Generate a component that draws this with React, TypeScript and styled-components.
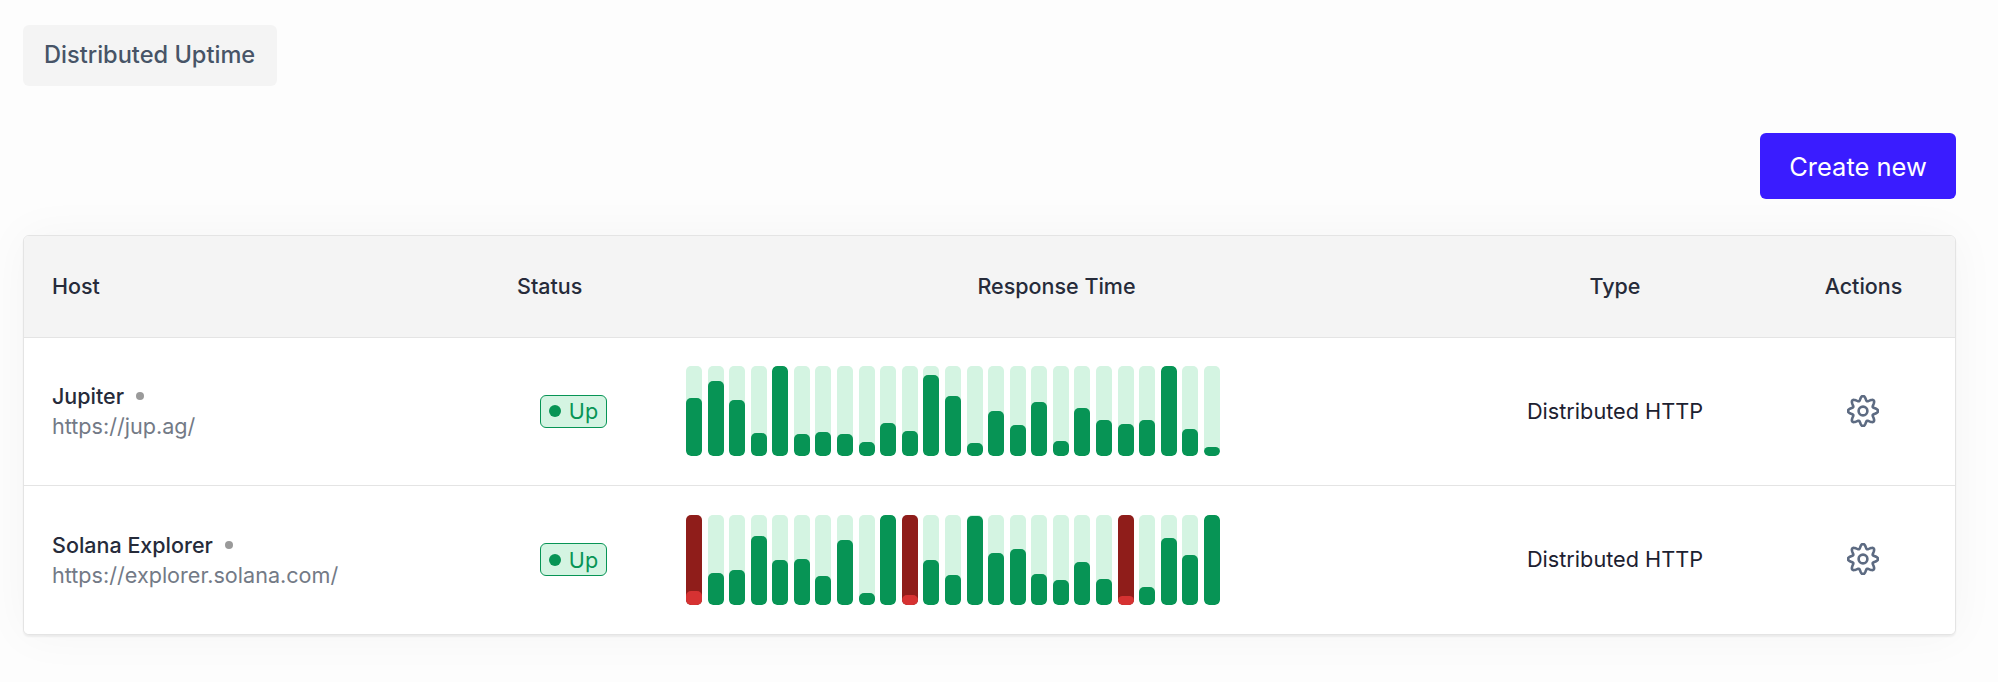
import React from "react";
import styled, { createGlobalStyle } from "styled-components";

const GlobalStyle = createGlobalStyle`
  html, body {
    margin: 0;
    background: #fdfdfd;
    font-family: Inter, "Liberation Sans", sans-serif;
  }
`;

const Page = styled.div`
  box-sizing: border-box;
  width: 1998px;
  height: 682px;
  padding: 25px 42px 0 23px;
  overflow: hidden;
`;

const Crumb = styled.div`
  display: inline-flex;
  align-items: center;
  height: 61px;
  padding: 0 21px 2px;
  box-sizing: border-box;
  width: 254px;
  background: #f4f4f4;
  border-radius: 6px;
  color: #475467;
  font-size: 23.6px;
  font-weight: 500;
  white-space: nowrap;
`;

const Actions = styled.div`
  display: flex;
  justify-content: flex-end;
  margin-top: 47px;
`;

const CreateButton = styled.button`
  width: 196px;
  height: 66px;
  padding: 0;
  border: 0;
  border-radius: 6px;
  background: #3a1cff;
  color: #fff;
  font: 400 25.5px Inter, "Liberation Sans", sans-serif;
`;

const Card = styled.div`
  margin-top: 36px;
  border: 1px solid #e4e4e4;
  border-radius: 6px;
  background: #fff;
  overflow: hidden;
  box-shadow: 0 2px 2px rgba(0, 0, 0, 0.06);
`;

const Shadow = styled.div`
  border-radius: 6px;
  box-shadow: 0 0 48px rgba(0, 0, 0, 0.04);
`;

const Row = styled.div<{ $head?: boolean }>`
  display: grid;
  grid-template-columns: 473px 153px 813px 309px 1fr;
  align-items: center;
  height: ${(p) => (p.$head ? "101px" : "147px")};
  background: ${(p) => (p.$head ? "#f4f4f4" : "#fff")};
  & + & {
    border-top: 1px solid #e4e4e4;
  }
  &:last-child {
    height: 148px;
  }
`;

const HeadCell = styled.div<{ $align?: string; $pad?: number; $padRight?: number }>`
  text-align: ${(p) => p.$align ?? "center"};
  padding: 0 ${(p) => p.$padRight ?? 0}px 2px ${(p) => p.$pad ?? 0}px;
  color: #262b3a;
  font-size: 21.5px;
  font-weight: 500;
`;

const HostCell = styled.div`
  padding: 0 0 1px 28px;
`;

const HostName = styled.div`
  display: flex;
  align-items: center;
  gap: 12px;
  color: #262b3a;
  font-size: 21.5px;
  line-height: 30px;
  font-weight: 500;
`;

const Dot = styled.span`
  width: 8px;
  height: 8px;
  border-radius: 50%;
  background: #9a9a9a;
`;

const HostUrl = styled.div`
  color: #737a86;
  font-size: 21.6px;
  line-height: 30px;
`;

const StatusCell = styled.div`
  display: flex;
  justify-content: center;
  padding-bottom: 1px;
`;

const Badge = styled.span`
  display: inline-flex;
  align-items: center;
  gap: 8px;
  height: 33px;
  padding: 0 8px;
  box-sizing: border-box;
  border: 1px solid #079455;
  border-radius: 6px;
  background: #d4f4e2;
  color: #079455;
  font-size: 21.6px;
`;

const BadgeDot = styled.span`
  width: 12px;
  height: 12px;
  border-radius: 50%;
  background: #079455;
`;

const Bars = styled.div`
  display: flex;
  gap: 5.6px;
  height: 90px;
  width: 534px;
  margin: -1px 0 0 36px;
`;

const Track = styled.div<{ $down?: boolean }>`
  flex: 1;
  display: flex;
  align-items: flex-end;
  border-radius: 5px;
  background: ${(p) => (p.$down ? "#8f1d1a" : "#d4f4e2")};
  overflow: hidden;
`;

const Fill = styled.div<{ $down?: boolean }>`
  width: 100%;
  border-radius: 5px;
  background: ${(p) => (p.$down ? "#d63232" : "#079455")};
`;

const TypeCell = styled.div`
  text-align: center;
  padding: 0 5px 2px 0;
  color: #1c2130;
  font-size: 21.7px;
`;

const ActionCell = styled.div`
  display: flex;
  justify-content: center;
  padding: 0 1px 2px 0;
  color: #5d6b82;
`;

// eight rounded teeth, the outline runs as one wave round the hub
const gearPath = (() => {
  const pts: string[] = [];
  for (let i = 0; i < 96; i++) {
    const a = (i / 96) * Math.PI * 2;
    const r = 12.8 + 2.3 * Math.cos(8 * a);
    pts.push(`${(16 + r * Math.sin(a)).toFixed(2)} ${(16 - r * Math.cos(a)).toFixed(2)}`);
  }
  return `M${pts.join("L")}Z`;
})();

const GearIcon = () => (
  <svg width="32" height="32" viewBox="0 0 32 32" fill="none" stroke="currentColor" strokeWidth="2.6" strokeLinejoin="round">
    <path d={gearPath} />
    <circle cx="16" cy="16" r="4.4" />
  </svg>
);

type Beat = { h: number; down?: boolean };

const jupiter: Beat[] = [144, 93, 150, 249, 47, 252, 246, 252, 276, 219, 243, 75, 138, 279, 183, 225, 156, 273, 174, 210, 222, 210, 47, 237, 291].map(
  (t) => ({ h: ((318 - t) / 271) * 100 })
);

const solana: Beat[] = [
  { h: 14.5, down: true },
  ...[219, 210, 108, 180, 177, 228, 120, 279, 45].map((t) => ({ h: ((315 - t) / 270) * 100 })),
  { h: 11, down: true },
  ...[180, 225, 48, 159, 147, 222, 240, 186, 237].map((t) => ({ h: ((315 - t) / 270) * 100 })),
  { h: 10, down: true },
  ...[261, 114, 165, 45].map((t) => ({ h: ((315 - t) / 270) * 100 })),
];

const monitors = [
  { name: "Jupiter", url: "https://jup.ag/", beats: jupiter },
  { name: "Solana Explorer", url: "https://explorer.solana.com/", beats: solana },
];

export default function App() {
  return (
    <Page>
      <GlobalStyle />
      <Crumb>Distributed Uptime</Crumb>
      <Actions>
        <CreateButton>Create new</CreateButton>
      </Actions>
      <Shadow>
        <Card>
          <Row $head>
            <HeadCell $align="left" $pad={28}>Host</HeadCell>
            <HeadCell $align="left" $pad={20}>Status</HeadCell>
            <HeadCell>Response Time</HeadCell>
            <HeadCell $padRight={5}>Type</HeadCell>
            <HeadCell>Actions</HeadCell>
          </Row>
          {monitors.map((m) => (
            <Row key={m.name}>
              <HostCell>
                <HostName>
                  {m.name}
                  <Dot />
                </HostName>
                <HostUrl>{m.url}</HostUrl>
              </HostCell>
              <StatusCell>
                <Badge>
                  <BadgeDot />
                  Up
                </Badge>
              </StatusCell>
              <Bars>
                {m.beats.map((b, i) => (
                  <Track key={i} $down={b.down}>
                    <Fill $down={b.down} style={{ height: `${b.h}%` }} />
                  </Track>
                ))}
              </Bars>
              <TypeCell>Distributed HTTP</TypeCell>
              <ActionCell>
                <GearIcon />
              </ActionCell>
            </Row>
          ))}
        </Card>
      </Shadow>
    </Page>
  );
}
